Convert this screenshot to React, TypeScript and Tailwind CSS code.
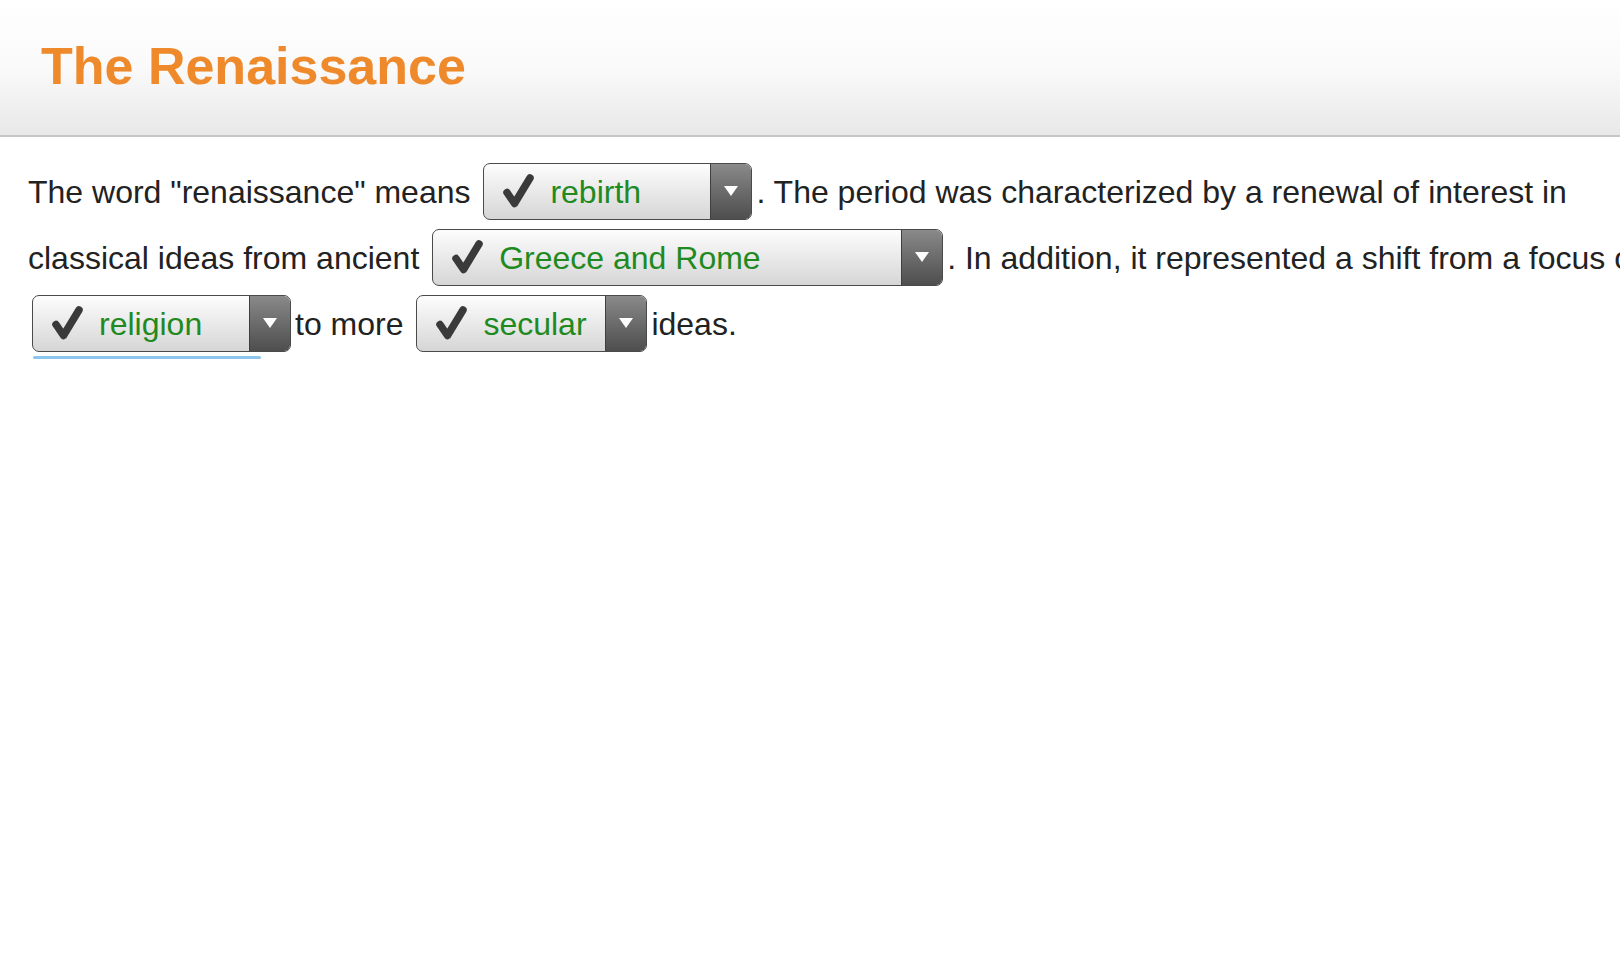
import React from "react";

type Pick = { text: string; width: string; focused?: boolean };

function Check() {
  return (
    <svg width="32" height="34" viewBox="0 0 32 34" className="inline-block align-[-5px]">
      <path
        d="M5 18.5 L12.5 29.5 L28 4"
        fill="none"
        stroke="#3a3a3a"
        strokeWidth="7.5"
        strokeLinecap="round"
        strokeLinejoin="round"
      />
    </svg>
  );
}

function Dropdown({ text, width, focused }: Pick) {
  return (
    <span
      className={`relative mx-[4px] inline-flex h-[57px] items-stretch rounded-[7px] border-[1.5px] border-[#4a4a4a] bg-gradient-to-b from-[#fdfdfd] to-[#d6d6d6] ${width}`}
    >
      <span className="block flex-1 whitespace-nowrap pl-[18px] pt-[1px] leading-[54px]">
        <Check />
        <span className="ml-[16px] text-[32px] text-[#1f8a1f]">{text}</span>
      </span>
      <span className="flex w-[41px] items-center justify-center rounded-r-[6px] border-l border-[#3f3f3f] bg-gradient-to-b from-[#8a8a8a] to-[#4e4e4e] pb-[2px]">
        <svg width="14" height="10" viewBox="0 0 14 10">
          <path d="M0 0 H14 L7 10 Z" fill="#ffffff" />
        </svg>
      </span>
      {focused && (
        <span className="absolute left-0 top-[calc(100%+5px)] h-[3px] w-[228px] rounded-full bg-[#8cc5ee]" />
      )}
    </span>
  );
}

export default function App() {
  return (
    <div className="min-h-[966px] w-full overflow-hidden bg-white font-['Liberation_Sans',Arial,sans-serif]">
      <header className="h-[137px] border-b-2 border-[#c6c6c6] bg-gradient-to-b from-white via-[#fafafa] to-[#e8e8e8] pl-[41px] pt-[40px]">
        <h1 className="text-[52px] font-bold leading-[52px] text-[#ef8a2c]">The Renaissance</h1>
      </header>
      <div className="pl-[28px] pt-[22px]">
        <p className="w-[1640px] text-[32px] leading-[66px] text-[#222222]">
          The word "renaissance" means <Dropdown text="rebirth" width="w-[269px]" />. The period was
          characterized by a renewal of interest in classical ideas from ancient{" "}
          <Dropdown text="Greece and Rome" width="w-[511px]" />. In addition, it represented a shift from
          a focus on <Dropdown text="religion" width="w-[259px]" focused />
          to more <Dropdown text="secular" width="w-[231px]" />
          ideas.
        </p>
      </div>
    </div>
  );
}
